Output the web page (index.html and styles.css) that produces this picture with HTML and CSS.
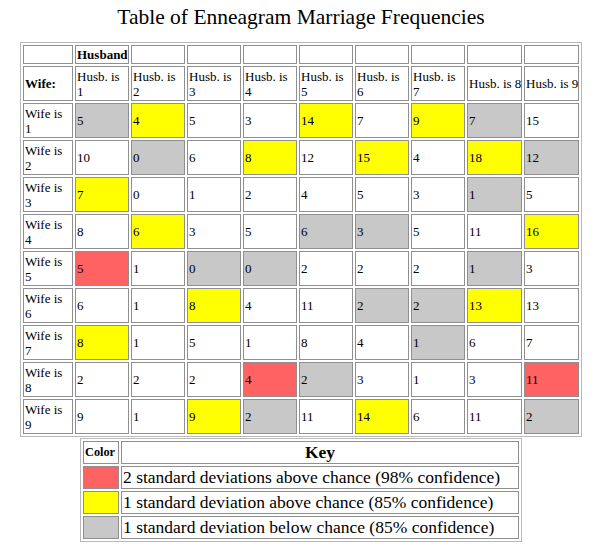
FILE: index.html
```html
<!DOCTYPE html>
<html>
<head>
<meta charset="utf-8">
<title>Table of Enneagram Marriage Frequencies</title>
<link rel="stylesheet" href="styles.css">
</head>
<body>
<h1 class="title">Table of Enneagram Marriage Frequencies</h1>
<table class="freq">
  <tr class="row-top">
    <td class="c0"></td><td class="c b">Husband</td><td class="c"></td><td class="c"></td><td class="c"></td><td class="c"></td><td class="c"></td><td class="c"></td><td class="c8"></td><td class="c8"></td>
  </tr>
  <tr class="row">
    <td class="b">Wife:</td><td>Husb. is 1</td><td>Husb. is 2</td><td>Husb. is 3</td><td>Husb. is 4</td><td>Husb. is 5</td><td>Husb. is 6</td><td>Husb. is 7</td><td class="nw">Husb. is 8</td><td class="nw">Husb. is 9</td>
  </tr>
  <tr class="row">
    <td>Wife is 1</td><td class="g">5</td><td class="y">4</td><td>5</td><td>3</td><td class="y">14</td><td>7</td><td class="y">9</td><td class="g">7</td><td>15</td>
  </tr>
  <tr class="row">
    <td>Wife is 2</td><td>10</td><td class="g">0</td><td>6</td><td class="y">8</td><td>12</td><td class="y">15</td><td>4</td><td class="y">18</td><td class="g">12</td>
  </tr>
  <tr class="row">
    <td>Wife is 3</td><td class="y">7</td><td>0</td><td>1</td><td>2</td><td>4</td><td>5</td><td>3</td><td class="g">1</td><td>5</td>
  </tr>
  <tr class="row">
    <td>Wife is 4</td><td>8</td><td class="y">6</td><td>3</td><td>5</td><td class="g">6</td><td class="g">3</td><td>5</td><td>11</td><td class="y">16</td>
  </tr>
  <tr class="row">
    <td>Wife is 5</td><td class="r">5</td><td>1</td><td class="g">0</td><td class="g">0</td><td>2</td><td>2</td><td>2</td><td class="g">1</td><td>3</td>
  </tr>
  <tr class="row">
    <td>Wife is 6</td><td>6</td><td>1</td><td class="y">8</td><td>4</td><td>11</td><td class="g">2</td><td class="g">2</td><td class="y">13</td><td>13</td>
  </tr>
  <tr class="row">
    <td>Wife is 7</td><td class="y">8</td><td>1</td><td>5</td><td>1</td><td>8</td><td>4</td><td class="g">1</td><td>6</td><td>7</td>
  </tr>
  <tr class="row">
    <td>Wife is 8</td><td>2</td><td>2</td><td>2</td><td class="r">4</td><td class="g">2</td><td>3</td><td>1</td><td>3</td><td class="r">11</td>
  </tr>
  <tr class="row">
    <td>Wife is 9</td><td>9</td><td>1</td><td class="y">9</td><td class="g">2</td><td>11</td><td class="y">14</td><td>6</td><td>11</td><td class="g">2</td>
  </tr>
</table>
<table class="key">
  <tr class="key-head">
    <td class="kc color-label">Color</td><td class="kt key-label">Key</td>
  </tr>
  <tr class="key-row">
    <td class="r"></td><td>2 standard deviations above chance (98% confidence)</td>
  </tr>
  <tr class="key-row">
    <td class="y"></td><td>1 standard deviation above chance (85% confidence)</td>
  </tr>
  <tr class="key-row">
    <td class="g"></td><td>1 standard deviation below chance (85% confidence)</td>
  </tr>
</table>
</body>
</html>
```

FILE: styles.css
```css
html, body {
  margin: 0;
  padding: 0;
  background: #ffffff;
  color: #000000;
  font-family: "Liberation Serif", "Times New Roman", serif;
}

.title {
  margin: 0;
  padding-top: 5px;
  height: 24px;
  line-height: 24px;
  font-size: 21.5px;
  font-weight: normal;
  text-align: center;
}

.freq {
  margin: 13px auto 0;
  width: 562px;
  table-layout: fixed;
  border: 1px solid #b8b8b8;
  border-spacing: 2px;
  font-size: 13px;
  line-height: 15px;
}

.freq td {
  box-sizing: border-box;
  border: 1px solid #8f8f8f;
  padding: 1px;
  vertical-align: middle;
  text-align: left;
}

.freq .nw {
  white-space: nowrap;
  padding-left: 1px;
  padding-right: 0;
}

.freq .c0 { width: 50px; }
.freq .c { width: 54px; }
.freq .c8 { width: 55px; }

.freq .row-top td { height: 18px; }
.freq .row td { height: 35px; }

.b { font-weight: bold; }

.g { background: #c8c8c8; }
.y { background: #ffff00; }
.r { background: #ff6262; }

.key {
  margin: 1px auto 0;
  width: 442px;
  table-layout: fixed;
  border: 1px solid #b8b8b8;
  border-spacing: 2px;
  font-size: 17.5px;
  line-height: 19px;
}

.key td {
  box-sizing: border-box;
  border: 1px solid #8f8f8f;
  padding: 1px;
  vertical-align: middle;
  text-align: left;
  white-space: nowrap;
}

.key .kc { width: 36px; }
.key .kt { width: 398px; }

.key .key-head td { height: 23px; }
.key .key-row td { height: 23px; }

.key .color-label {
  font-size: 12.3px;
  font-weight: bold;
  padding-left: 1px;
}

.key .key-label {
  font-weight: bold;
  text-align: center;
}
```
